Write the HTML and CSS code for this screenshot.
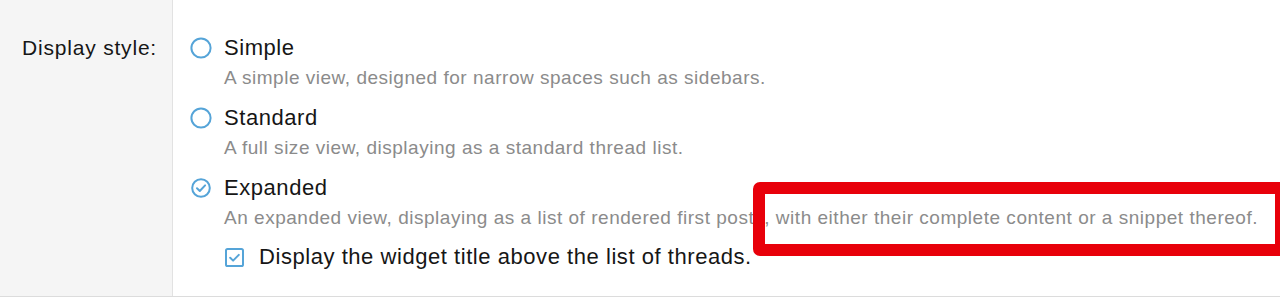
FILE: index.html
```html
<!DOCTYPE html>
<html lang="en">
<head>
<meta charset="utf-8">
<title>Display style</title>
<link rel="stylesheet" href="styles.css">
</head>
<body>
<div class="page">
  <div class="form-row">
    <div class="row-label"><span>Display style:</span></div>
    <div class="row-input">
      <ul class="choices">
        <li class="choice">
          <div class="choice-head">
            <svg class="radio" viewBox="0 0 22 22" width="22" height="22"><circle cx="11" cy="11" r="9.6" /></svg>
            <span class="choice-label">Simple</span>
          </div>
          <div class="hint">A simple view, designed for narrow spaces such as sidebars.</div>
        </li>
        <li class="choice">
          <div class="choice-head">
            <svg class="radio" viewBox="0 0 22 22" width="22" height="22"><circle cx="11" cy="11" r="9.6" /></svg>
            <span class="choice-label">Standard</span>
          </div>
          <div class="hint">A full size view, displaying as a standard thread list.</div>
        </li>
        <li class="choice">
          <div class="choice-head">
            <svg class="radio" viewBox="0 0 22 22" width="22" height="22"><circle cx="11" cy="11" r="8.8" /><path d="M7 11.3 L9.8 14 L15.1 8.4" /></svg>
            <span class="choice-label">Expanded</span>
          </div>
          <div class="hint">An expanded view, displaying as a list of rendered first posts, with either their complete content or a snippet thereof.</div>
          <div class="check-row">
            <svg class="checkbox" viewBox="0 0 19 19" width="19" height="19"><rect x="1" y="1" width="17" height="17" rx="1.6" /><path d="M5.2 9.8 L8.1 12.6 L13.8 6.9" /></svg>
            <span class="choice-label">Display the widget title above the list of threads.</span>
          </div>
        </li>
      </ul>
    </div>
  </div>
  <div class="highlight"></div>
</div>
</body>
</html>
```

FILE: styles.css
```css
* { box-sizing: border-box; }

html, body {
  margin: 0;
  padding: 0;
  background: #ffffff;
}

body {
  font-family: "Liberation Sans", Arial, sans-serif;
  color: #1a1a1a;
}

.page {
  position: relative;
  width: 1280px;
  height: 299px;
  overflow: hidden;
}

.form-row {
  display: flex;
  height: 297px;
  border-bottom: 1px solid #dcdcdc;
}

.row-label {
  width: 173px;
  flex: none;
  background: #f5f5f5;
  border-right: 1px solid #e2e2e2;
  padding: 36px 15px 0 0;
  text-align: right;
  font-size: 21px;
  letter-spacing: 0.8px;
  line-height: 24px;
  color: #161616;
}

.row-input {
  flex: 1;
  padding: 36px 0 0 17px;
}

.choices {
  list-style: none;
  margin: 0;
  padding: 0;
}

.choice {
  margin-bottom: 16px;
}

.choice-head {
  display: flex;
  align-items: center;
  gap: 12px;
  height: 24px;
}

.choice-label {
  font-size: 22px;
  letter-spacing: 0.55px;
  line-height: 24px;
  color: #161616;
}

.radio {
  flex: none;
  fill: none;
  stroke: #55a4d8;
  stroke-width: 2;
  stroke-linecap: round;
  stroke-linejoin: round;
}

.hint {
  margin: 6px 0 0 34px;
  font-size: 19px;
  letter-spacing: 0.52px;
  line-height: 24px;
  color: #8b8b8b;
}

.check-row {
  display: flex;
  align-items: center;
  gap: 15px;
  height: 24px;
  margin: 15px 0 0 35px;
}

.checkbox {
  flex: none;
  fill: none;
  stroke: #55a4d8;
  stroke-width: 2;
  stroke-linecap: round;
  stroke-linejoin: round;
}

.highlight {
  position: absolute;
  left: 753px;
  top: 182px;
  width: 534px;
  height: 74px;
  border: 12px solid #e8000a;
  border-radius: 7px;
}
```
